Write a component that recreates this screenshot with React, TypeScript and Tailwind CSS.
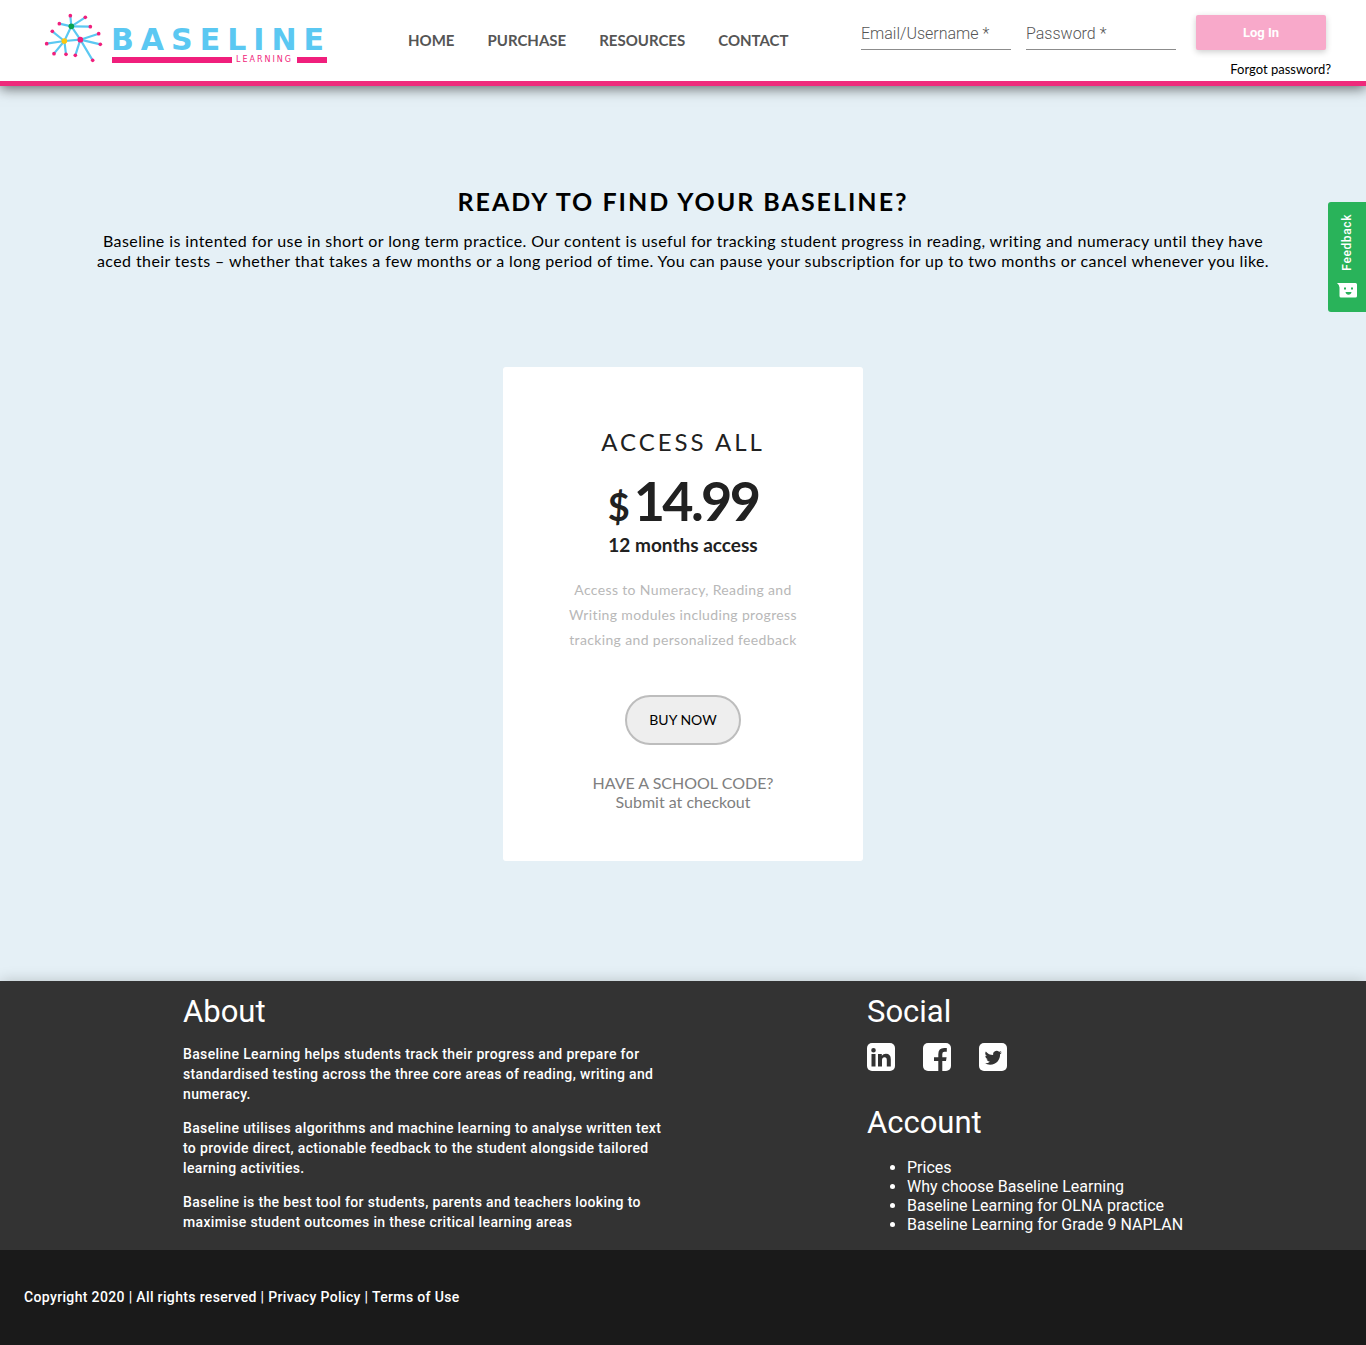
import React from "react";

type Point = [number, number];

const hubs: { at: Point; color: string; ends: Point[] }[] = [
  { at: [94, 55], color: "#0aa34f", ends: [[91, 23], [136, 28], [58, 47], [151, 56]] },
  { at: [73, 99], color: "#fdc80f", ends: [[37, 70], [20, 107], [42, 137], [78, 139]] },
  { at: [121, 95], color: "#f01f7c", ends: [[176, 77], [181, 109], [106, 142], [158, 157]] },
];

function LogoMark() {
  return (
    <svg viewBox="0 0 210 180" className="h-[60px] w-[70px] shrink-0" aria-hidden="true">
      <path d="M94 55 73 99 121 95Z" fill="none" stroke="#5bc8f2" strokeWidth="6.5" />
      {hubs.map((hub) =>
        hub.ends.map((end) => (
          <line
            key={end.join()}
            x1={hub.at[0]}
            y1={hub.at[1]}
            x2={end[0]}
            y2={end[1]}
            stroke="#5bc8f2"
            strokeWidth="6.5"
          />
        )),
      )}
      {hubs.map((hub) => (
        <g key={hub.color}>
          {hub.ends.map((end) => (
            <circle key={end.join()} cx={end[0]} cy={end[1]} r="5.500" fill="#f01f7c" />
          ))}
          <circle cx={hub.at[0]} cy={hub.at[1]} r="8.5" fill={hub.color} />
        </g>
      ))}
    </svg>
  );
}

function Logo() {
  return (
    <a href="#home" aria-label="Baseline Learning" className="flex shrink-0 items-start pt-2 pl-10">
      <LogoMark />
      <span className="mt-4 ml-px flex w-[216px] flex-col font-['DejaVu_Sans',sans-serif]">
        <span className="text-[30px] leading-8 font-bold tracking-[7px] whitespace-nowrap text-[#5bc8f2]">
          BASELINE
        </span>
        <span className="flex items-center gap-1 pl-px text-[8px] leading-[8px] tracking-[2px] text-[#f01f7c]">
          <span className="h-[6px] flex-1 bg-[#f01f7c]" />
          <span>LEARNING</span>
          <span className="h-[6px] w-[30px] bg-[#f01f7c]" />
        </span>
      </span>
    </a>
  );
}

const navItems = ["HOME", "PURCHASE", "RESOURCES", "CONTACT"];

function Header() {
  return (
    <header className="relative z-10 flex h-[86px] items-start border-b-[5px] border-[#ee2a7b] bg-white shadow-[0_3px_12px_rgba(0,0,0,0.55)]">
      <Logo />
      <nav className="ml-[81px] flex gap-[33px] pt-[30px] text-[15px] leading-5 font-bold text-[#555]">
        {navItems.map((item) => (
          <a key={item} href={"#" + item.toLowerCase()}>
            {item}
          </a>
        ))}
      </nav>
      <form className="ml-auto flex flex-col pt-[15px] pr-[35px]">
        <div className="flex items-start pr-[5px] font-['Roboto',sans-serif]">
          <input
            type="text"
            aria-label="Email/Username"
            placeholder="Email/Username *"
            className="mr-[15px] h-[35px] w-[150px] border-b border-[#8c8c8c] pt-[2px] text-base font-light outline-none placeholder:text-[#555]"
          />
          <input
            type="password"
            aria-label="Password"
            placeholder="Password *"
            className="mr-5 h-[35px] w-[150px] border-b border-[#8c8c8c] pt-[2px] text-base font-light outline-none placeholder:text-[#555]"
          />
          <button
            type="button"
            className="h-[35px] w-[130px] rounded-[2px] bg-[#f8a9ca] text-[13px] font-bold text-white shadow-[0_2px_6px_rgba(0,0,0,0.2)]"
          >
            Log In
          </button>
        </div>
        <a href="#forgot" className="mt-[11px] self-end text-[13px] leading-4 text-black">
          Forgot password?
        </a>
      </form>
    </header>
  );
}

function FeedbackTab() {
  return (
    <button
      type="button"
      className="fixed top-[202px] right-0 z-20 flex h-[110px] w-[38px] flex-col items-center justify-end gap-[11px] rounded-l-[3px] bg-[#29b35a] pb-[14px] text-white"
    >
      <span className="rotate-180 font-['Roboto',sans-serif] text-xs leading-4 font-medium tracking-wider [writing-mode:vertical-rl]">
        Feedback
      </span>
      <svg viewBox="0 0 20 16" className="h-4 w-5" aria-hidden="true">
        <path d="M0 1H18.500Q20 1 20 2.500V14Q20 15.500 18.500 15.500H4Q2.500 15.500 2.500 14V5.500Q2.500 3 0 1Z" fill="#fff" />
        <path d="M7 5.500H9V7.500H7ZM14 5.500H16V7.500H14ZM8.500 10H14.500Q14 12.800 11.500 12.800T8.500 10Z" fill="#29b35a" />
      </svg>
    </button>
  );
}

function PriceCard() {
  return (
    <section className="mx-auto mt-24 flex w-[360px] flex-col items-center rounded-[3px] bg-white px-12 pt-[59px] pb-[50px] text-center text-[#212121]">
      <h2 className="text-2xl leading-8 tracking-[3px]">ACCESS ALL</h2>
      <p className="mt-4 flex items-baseline gap-1 leading-[54px] font-bold">
        <span className="text-[38px]">$</span>
        <span className="text-[54px] tracking-tighter">14.99</span>
      </p>
      <p className="text-[19px] leading-6 font-bold">12 months access</p>
      <p className="mt-5 text-sm leading-[25px] tracking-wide text-[#b8b8b8]">
        Access to Numeracy, Reading and
        <br />
        Writing modules including progress
        <br />
        tracking and personalized feedback
      </p>
      <button
        type="button"
        className="mt-[43px] h-[50px] w-[116px] rounded-full border-2 border-[#bdbdbd] bg-[#eee] text-sm text-black"
      >
        BUY NOW
      </button>
      <p className="mt-7 text-base leading-[19px] text-[#808080]">
        HAVE A SCHOOL CODE?
        <br />
        Submit at checkout
      </p>
    </section>
  );
}

const about = [
  "Baseline Learning helps students track their progress and prepare for standardised testing across the three core areas of reading, writing and numeracy.",
  "Baseline utilises algorithms and machine learning to analyse written text to provide direct, actionable feedback to the student alongside tailored learning activities.",
  "Baseline is the best tool for students, parents and teachers looking to maximise student outcomes in these critical learning areas",
];

const accountLinks = [
  "Prices",
  "Why choose Baseline Learning",
  "Baseline Learning for OLNA practice",
  "Baseline Learning for Grade 9 NAPLAN",
];

const social = [
  {
    name: "LinkedIn",
    path: "M4.500 11H8.500V23.500H4.500ZM6.500 5A2.300 2.300 0 1 1 6.500 9.600 2.300 2.300 0 1 1 6.500 5ZM11 11H14.800V12.800Q16.200 10.700 18.900 10.700 23.800 10.700 23.800 16.200V23.500H19.800V17Q19.800 14.200 17.600 14.200 15 14.200 15 17.200V23.500H11Z",
  },
  {
    name: "Facebook",
    path: "M15.300 28V18H11V14.200H15.300V11.200Q15.300 5 21.200 5H23.800V8.800H21.500Q19.300 8.800 19.300 11V14.200H23.600L23 18H19.300V28Z",
  },
  {
    name: "Twitter",
    path: "M22.800 9.400a7 7 0 0 1-2 .55 3.500 3.500 0 0 0 1.550-1.950 7 7 0 0 1-2.250.85 3.520 3.520 0 0 0-6 3.200 10 10 0 0 1-7.250-3.670 3.520 3.520 0 0 0 1.090 4.700 3.500 3.500 0 0 1-1.600-.44v.05a3.520 3.520 0 0 0 2.820 3.450 3.500 3.500 0 0 1-1.590.06 3.520 3.520 0 0 0 3.290 2.440 7.060 7.060 0 0 1-5.210 1.460 10 10 0 0 0 5.400 1.580c6.540 0 10.240-5.500 10-10.530a7 7 0 0 0 1.750-1.750Z",
  },
];

function Footer() {
  return (
    <footer className="relative font-['Roboto',sans-serif] text-white shadow-[0_0_14px_rgba(0,0,0,0.2)]">
      <div className="grid grid-cols-2 bg-[#333]">
        <div className="pt-[13px] pb-[18px] pl-[183px]">
          <h2 className="text-[31px] leading-9">About</h2>
          <div className="mt-[14px] flex max-w-[490px] flex-col gap-[14px] text-sm leading-5 font-medium tracking-wide">
            {about.map((text) => (
              <p key={text}>{text}</p>
            ))}
          </div>
        </div>
        <div className="pt-[13px] pl-[184px]">
          <h2 className="text-[31px] leading-9">Social</h2>
          <div className="mt-[13px] flex gap-7">
            {social.map((item) => (
              <a key={item.name} href={"#" + item.name.toLowerCase()} aria-label={item.name}>
                <svg viewBox="0 0 28 28" className="size-7" aria-hidden="true">
                  <rect width="28" height="28" rx="5" fill="#fff" />
                  <path d={item.path} fill="#333" />
                </svg>
              </a>
            ))}
          </div>
          <h2 className="mt-[34px] text-[31px] leading-9">Account</h2>
          <ul className="mt-[17px] list-disc pl-10 text-base leading-[19px]">
            {accountLinks.map((text) => (
              <li key={text}>
                <a href="#account">{text}</a>
              </li>
            ))}
          </ul>
        </div>
      </div>
      <div className="bg-[#1a1a1a] px-6 pt-[37px] pb-[38px] text-sm leading-5 font-medium tracking-wide">
        Copyright 2020 | All rights reserved | <a href="#privacy">Privacy Policy</a> |{" "}
        <a href="#terms">Terms of Use</a>
      </div>
    </footer>
  );
}

export default function App() {
  return (
    <div className="bg-[#e5f0f6] font-['Lato',sans-serif]">
      <Header />
      <FeedbackTab />
      <main className="px-10 pt-[99px] pb-[120px] text-black">
        <h1 className="text-center text-[25px] leading-8 font-bold tracking-[2px]">
          READY TO FIND YOUR BASELINE?
        </h1>
        <p className="mx-auto mt-[14px] max-w-[1190px] text-center text-base leading-5 tracking-wide">
          Baseline is intented for use in short or long term practice. Our content is useful for
          tracking student progress in reading, writing and numeracy until they have
          <br />
          aced their tests – whether that takes a few months or a long period of time. You can pause
          your subscription for up to two months or cancel whenever you like.
        </p>
        <PriceCard />
      </main>
      <Footer />
    </div>
  );
}
